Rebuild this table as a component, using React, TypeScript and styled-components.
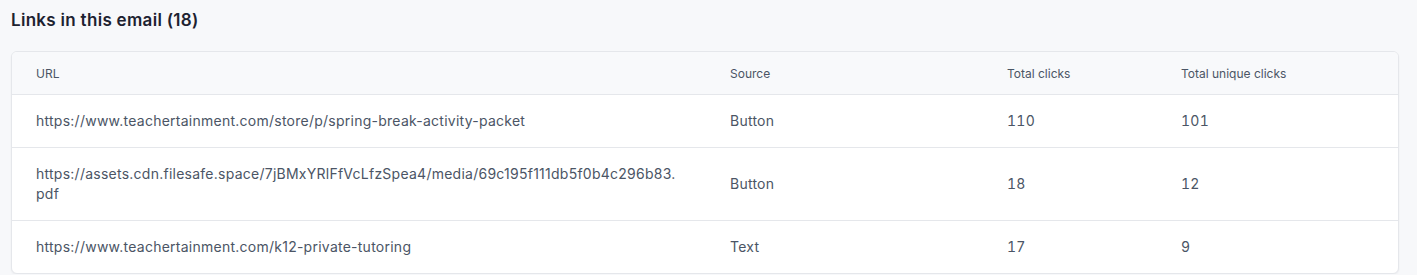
import React from "react";
import styled, { createGlobalStyle } from "styled-components";

const links = [
  { url: "https://www.teachertainment.com/store/p/spring-break-activity-packet", source: "Button", total: 110, unique: 101 },
  { url: "https://assets.cdn.filesafe.space/7jBMxYRlFfVcLfzSpea4/media/69c195f111db5f0b4c296b83.pdf", source: "Button", total: 18, unique: 12 },
  { url: "https://www.teachertainment.com/k12-private-tutoring", source: "Text", total: 17, unique: 9 },
];

export default function App() {
  return (
    <>
      <GlobalStyle />
      <Page>
        <Title>Links in this email ({18})</Title>
        <Card>
          <Table>
            <colgroup>
              <col style={{ width: 694 }} />
              <col style={{ width: 277 }} />
              <col style={{ width: 174 }} />
              <col />
            </colgroup>
            <thead>
              <tr>
                <HeadCell>URL</HeadCell>
                <HeadCell>Source</HeadCell>
                <HeadCell>Total clicks</HeadCell>
                <HeadCell>Total unique clicks</HeadCell>
              </tr>
            </thead>
            <tbody>
              {links.map((l) => (
                <Row key={l.url}>
                  <UrlCell>{l.url}</UrlCell>
                  <Cell>{l.source}</Cell>
                  <Cell $num>{l.total}</Cell>
                  <Cell $num>{l.unique}</Cell>
                </Row>
              ))}
            </tbody>
          </Table>
        </Card>
      </Page>
    </>
  );
}

const GlobalStyle = createGlobalStyle`
  body {
    margin: 0;
    background: #f7f8fa;
    font-family: Inter, "Noto Sans", sans-serif;
  }
`;

const Page = styled.div`
  padding: 9px 18px 0 11px;
`;

const Title = styled.h2`
  margin: 0 0 20px;
  font-size: 17px;
  line-height: 22px;
  letter-spacing: 0.3px;
  font-weight: 600;
  color: #1d2230;
`;

const Card = styled.div`
  background: #fff;
  border: 1px solid #e5e7eb;
  border-radius: 6px;
  box-shadow: 0 1px 2px rgba(16, 24, 40, 0.05);
  overflow: hidden;
`;

const Table = styled.table`
  width: 100%;
  border-collapse: collapse;
  table-layout: fixed;
`;

const HeadCell = styled.th`
  background: #f8f9fb;
  height: 42px;
  padding: 0 24px;
  text-align: left;
  font-size: 12px;
  font-weight: 400;
  color: #4b5565;
  border-bottom: 1px solid #e5e7eb;
`;

const Row = styled.tr`
  & + & td {
    border-top: 1px solid #e5e7eb;
  }
`;

const Cell = styled.td<{ $num?: boolean }>`
  padding: 16px 24px;
  height: 20px;
  font-size: 14px;
  line-height: 20px;
  letter-spacing: 0.25px;
  color: #4b5565;
  font-variant-numeric: ${(p) => (p.$num ? "tabular-nums" : "normal")};
  vertical-align: middle;
`;

const UrlCell = styled(Cell)`
  word-break: break-all;
`;
